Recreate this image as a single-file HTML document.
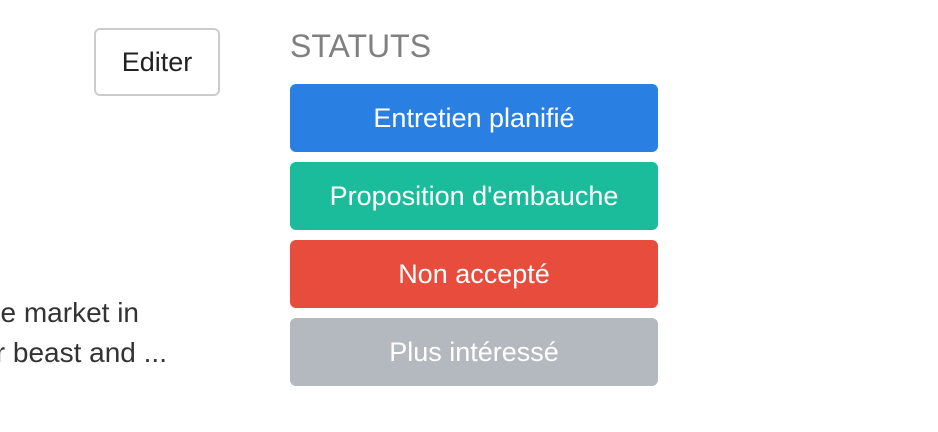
<!DOCTYPE html>
<html><head><meta charset="utf-8"><style>
html,body{margin:0;padding:0;width:938px;height:432px;background:#fff;overflow:hidden;position:relative;font-family:"Liberation Sans",sans-serif}
.ed{position:absolute;left:94px;top:28px;width:122px;height:64px;border:2px solid #ccc;border-radius:6px;font-size:27px;line-height:64px;text-align:center;color:#222}
.h{position:absolute;left:290px;top:27px;font-size:32px;color:#808080;line-height:38px}
.b{position:absolute;left:290px;width:368px;height:68px;border-radius:6px;color:#fff;font-size:27px;line-height:68px;text-align:center}
.t{position:absolute;font-size:28px;color:#333;white-space:nowrap;line-height:40px;text-align:right}
</style></head><body>
<div class="ed">Editer</div>
<div class="h">STATUTS</div>
<div class="b" style="top:84px;background:#2a80e2">Entretien planifié</div>
<div class="b" style="top:162px;background:#1abc9c">Proposition d'embauche</div>
<div class="b" style="top:240px;background:#e74c3c">Non accepté</div>
<div class="b" style="top:318px;background:#b3b9bf">Plus intéressé</div>
<div class="t" style="right:799px;top:293px">e market in</div>
<div class="t" style="right:771px;top:333px">r beast and ...</div>
</body></html>
